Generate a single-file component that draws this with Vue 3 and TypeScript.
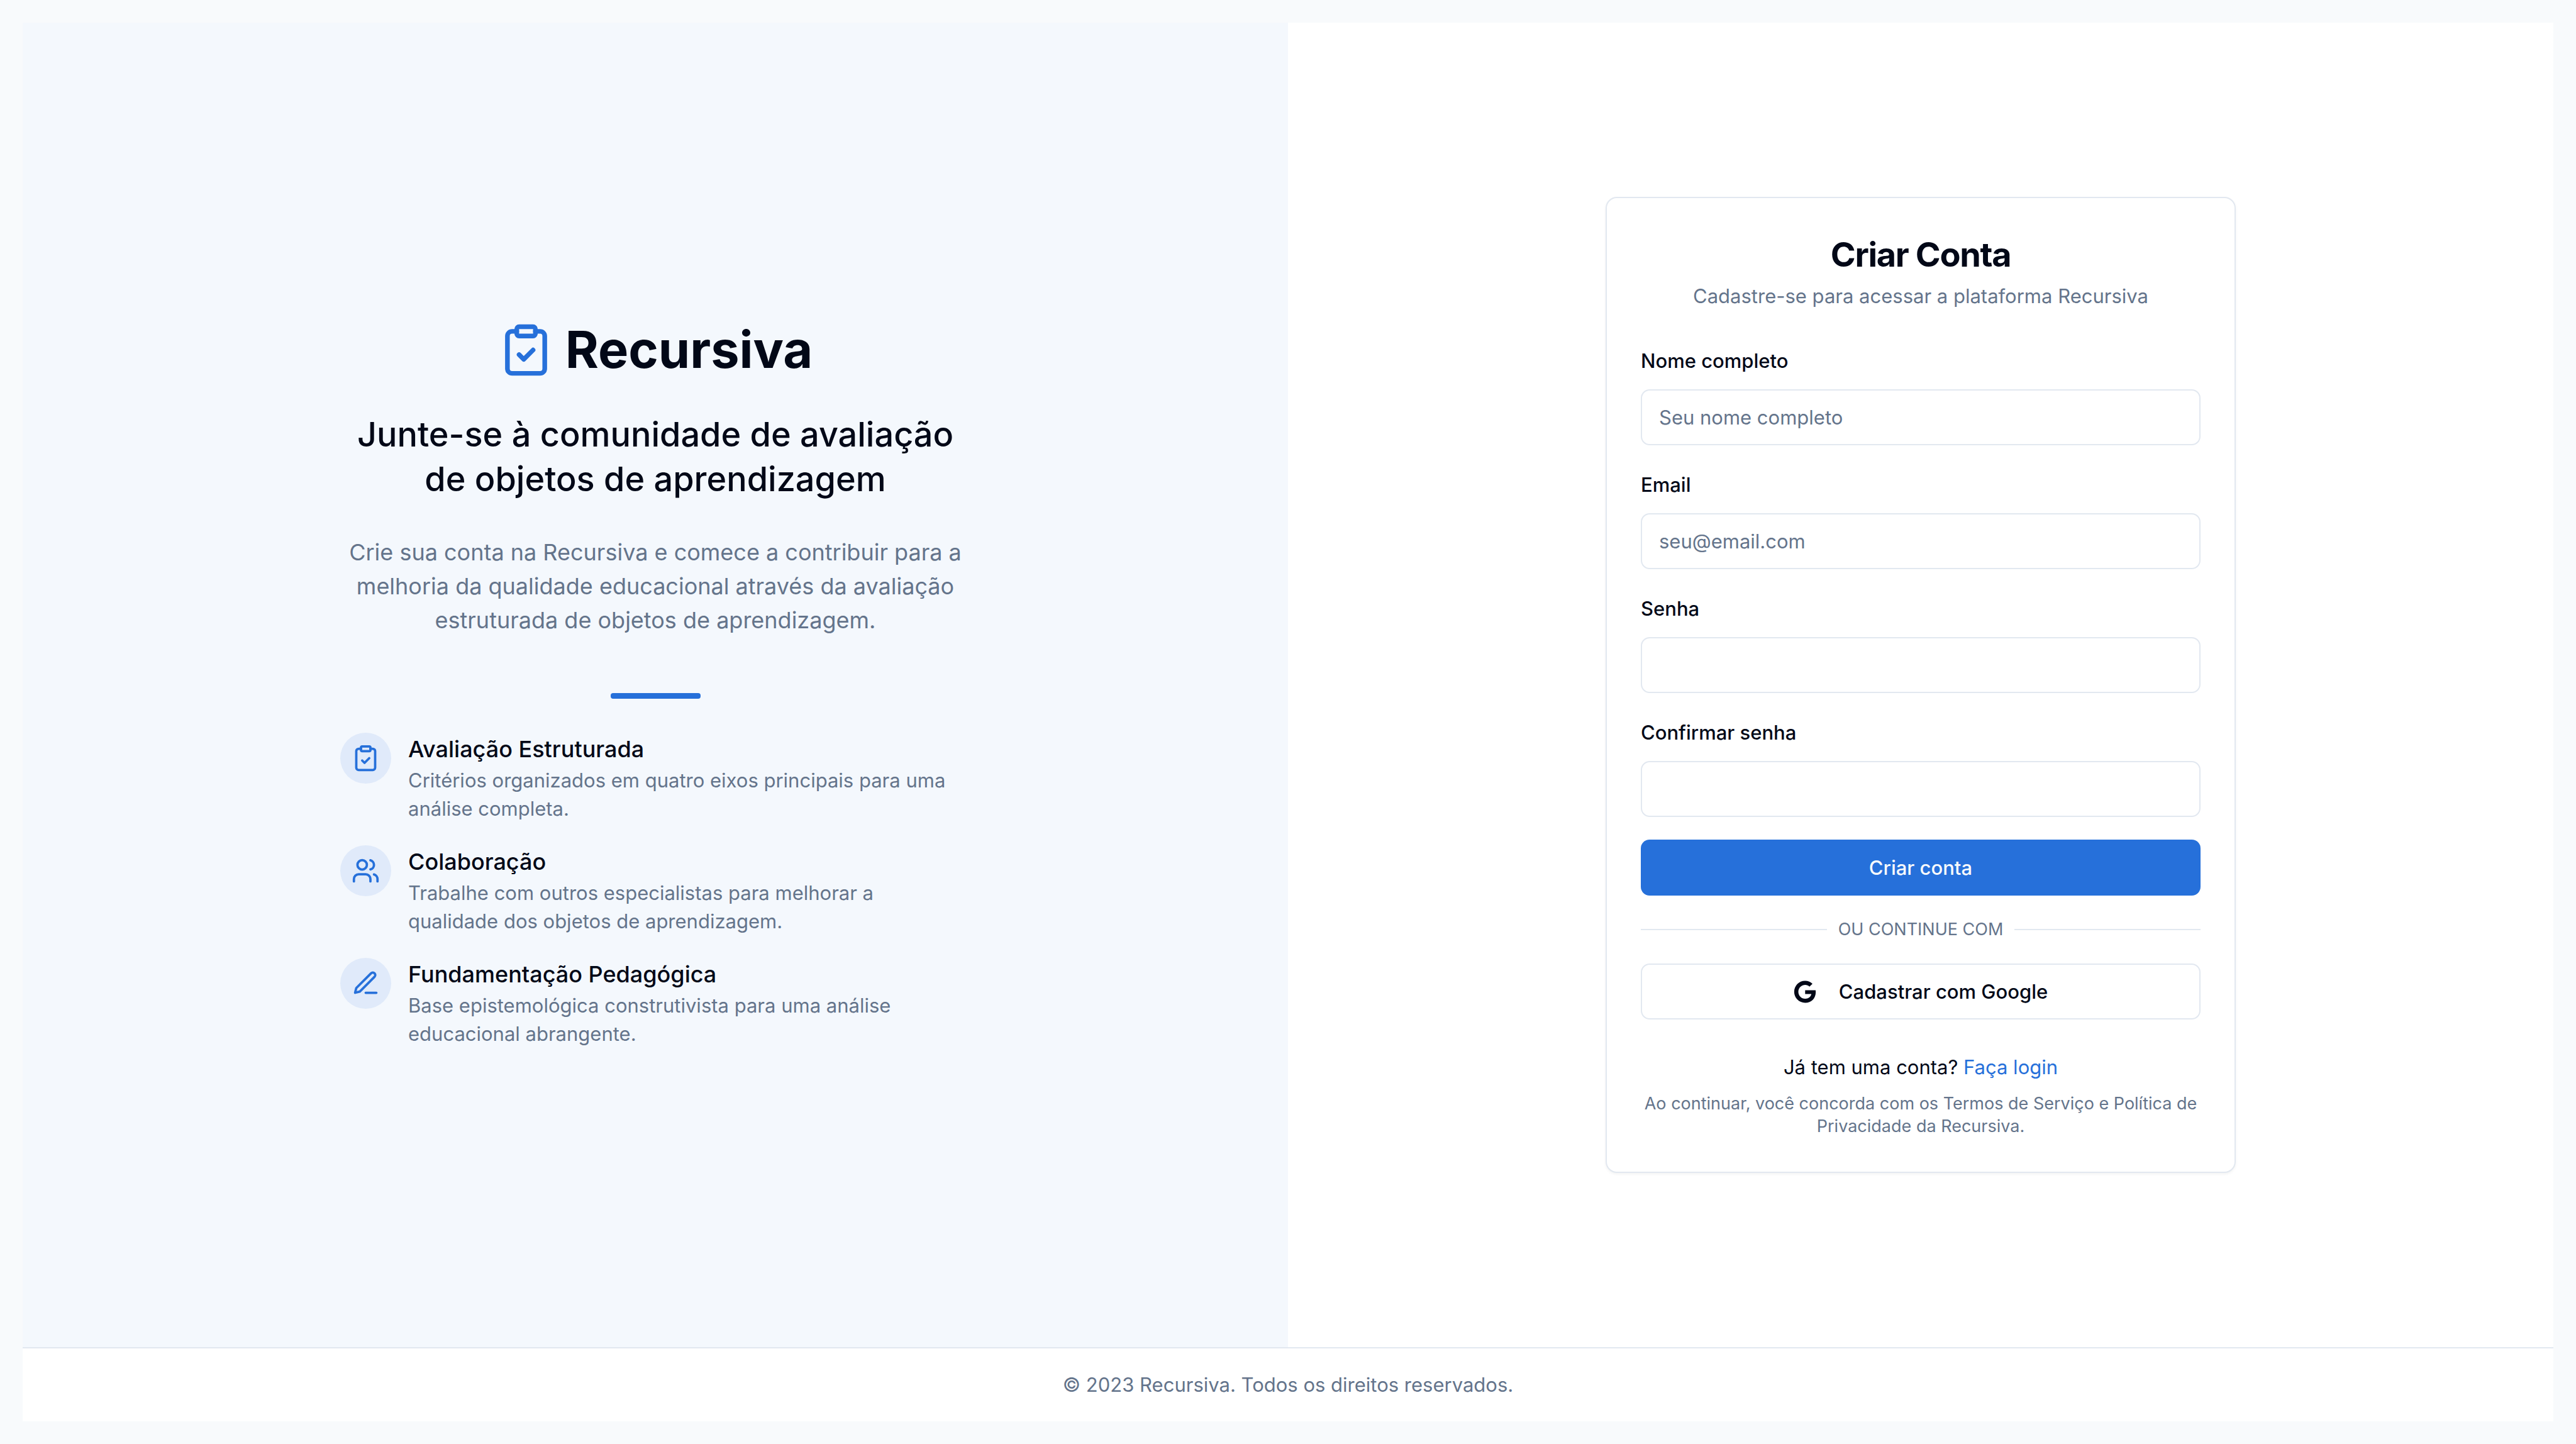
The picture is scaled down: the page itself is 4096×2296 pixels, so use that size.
<script setup lang="ts">
import { reactive } from 'vue'

type IconName = 'clipboard' | 'users' | 'pen'

interface Feature {
  icon: IconName
  title: string
  text: string
}

interface Field {
  id: 'name' | 'email' | 'password' | 'confirm'
  label: string
  type: string
  placeholder: string
}

const features: Feature[] = [
  {
    icon: 'clipboard',
    title: 'Avaliação Estruturada',
    text: 'Critérios organizados em quatro eixos principais para uma análise completa.',
  },
  {
    icon: 'users',
    title: 'Colaboração',
    text: 'Trabalhe com outros especialistas para melhorar a qualidade dos objetos de aprendizagem.',
  },
  {
    icon: 'pen',
    title: 'Fundamentação Pedagógica',
    text: 'Base epistemológica construtivista para uma análise educacional abrangente.',
  },
]

const fields: Field[] = [
  { id: 'name', label: 'Nome completo', type: 'text', placeholder: 'Seu nome completo' },
  { id: 'email', label: 'Email', type: 'email', placeholder: 'seu@email.com' },
  { id: 'password', label: 'Senha', type: 'password', placeholder: '' },
  { id: 'confirm', label: 'Confirmar senha', type: 'password', placeholder: '' },
]

const form = reactive<Record<Field['id'], string>>({
  name: '',
  email: '',
  password: '',
  confirm: '',
})
</script>

<template>
  <div class="page">
    <main class="columns">
      <section class="intro">
        <div class="intro-body">
          <div class="brand">
            <svg class="icon brand-icon" viewBox="0 0 24 24" aria-hidden="true">
              <rect width="8" height="4" x="8" y="2" rx="1" ry="1" />
              <path d="M16 4h2a2 2 0 0 1 2 2v14a2 2 0 0 1-2 2H6a2 2 0 0 1-2-2V6a2 2 0 0 1 2-2h2" />
              <path d="m9 14 2 2 4-4" />
            </svg>
            <h1>Recursiva</h1>
          </div>
          <h2>Junte-se à comunidade de avaliação de objetos de aprendizagem</h2>
          <p class="lead">
            Crie sua conta na Recursiva e comece a contribuir para a melhoria da qualidade
            educacional através da avaliação estruturada de objetos de aprendizagem.
          </p>
          <div class="bar"></div>
          <ul class="features">
            <li v-for="feature in features" :key="feature.title" class="feature">
              <span class="badge">
                <svg class="icon" viewBox="0 0 24 24" aria-hidden="true">
                  <template v-if="feature.icon === 'clipboard'">
                    <rect width="8" height="4" x="8" y="2" rx="1" ry="1" />
                    <path d="M16 4h2a2 2 0 0 1 2 2v14a2 2 0 0 1-2 2H6a2 2 0 0 1-2-2V6a2 2 0 0 1 2-2h2" />
                    <path d="m9 14 2 2 4-4" />
                  </template>
                  <template v-else-if="feature.icon === 'users'">
                    <path d="M16 21v-2a4 4 0 0 0-4-4H6a4 4 0 0 0-4 4v2" />
                    <circle cx="9" cy="7" r="4" />
                    <path d="M22 21v-2a4 4 0 0 0-3-3.87" />
                    <path d="M16 3.13a4 4 0 0 1 0 7.75" />
                  </template>
                  <template v-else>
                    <path d="M12 20h9" />
                    <path d="M16.5 3.5a2.12 2.12 0 0 1 3 3L7 19l-4 1 1-4Z" />
                  </template>
                </svg>
              </span>
              <div>
                <h3>{{ feature.title }}</h3>
                <p>{{ feature.text }}</p>
              </div>
            </li>
          </ul>
        </div>
      </section>

      <section class="signup">
        <div class="card">
          <header class="card-header">
            <h2>Criar Conta</h2>
            <p>Cadastre-se para acessar a plataforma Recursiva</p>
          </header>

          <form class="form" @submit.prevent>
            <div v-for="field in fields" :key="field.id" class="field">
              <label :for="field.id">{{ field.label }}</label>
              <input
                :id="field.id"
                v-model="form[field.id]"
                :type="field.type"
                :placeholder="field.placeholder"
              />
            </div>
            <button type="submit" class="button primary">Criar conta</button>
          </form>

          <div class="divider"><span>OU CONTINUE COM</span></div>

          <button type="button" class="button outline">
            <svg class="google" viewBox="0 0 488 512" aria-hidden="true">
              <path
                d="M488 261.8C488 403.3 391.1 504 248 504 110.8 504 0 393.2 0 256S110.8 8 248 8c66.8 0 123 24.5 166.3 64.9l-67.5 64.9C258.5 52.6 94.3 116.6 94.3 256c0 86.5 69.1 156.6 153.7 156.6 98.2 0 135-70.4 140.8-106.9H248v-85.3h236.1c2.3 12.7 3.9 24.9 3.9 41.4z"
              />
            </svg>
            Cadastrar com Google
          </button>

          <p class="login">Já tem uma conta? <a href="#login">Faça login</a></p>
          <p class="terms">
            Ao continuar, você concorda com os Termos de Serviço e Política de Privacidade da
            Recursiva.
          </p>
        </div>
      </section>
    </main>

    <footer class="footer">© 2023 Recursiva. Todos os direitos reservados.</footer>
  </div>
</template>

<style>
body {
  margin: 0;
  background: #f8fafc;
}
</style>

<style scoped>
.page,
.page * {
  box-sizing: border-box;
}

.page {
  --ink: #020817;
  --muted: #64748b;
  --line: #e2e8f0;
  --primary: #2670da;

  display: flex;
  flex-direction: column;
  min-height: 100vh;
  padding: 36px;
  color: var(--ink);
  font-family: Inter, "Liberation Sans", sans-serif;
  font-size: 31px;
  line-height: 44px;
}

h1,
h2,
h3,
p,
ul {
  margin: 0;
  padding: 0;
}

.columns {
  flex: 1;
  display: grid;
  grid-template-columns: 1fr 1fr;
  background: #ffffff;
}

.intro,
.signup {
  display: flex;
  align-items: center;
  justify-content: center;
}

.intro {
  background: #f4f8fd;
}

.intro-body,
.card {
  width: 100%;
  max-width: 1002px;
}

.intro-body {
  text-align: center;
}

.icon {
  display: block;
  width: 45px;
  height: 45px;
  fill: none;
  stroke: var(--primary);
  stroke-width: 2;
  stroke-linecap: round;
  stroke-linejoin: round;
}

.brand {
  display: flex;
  align-items: center;
  justify-content: center;
  gap: 18px;
  margin-bottom: 54px;
}

.brand-icon {
  width: 89px;
  height: 89px;
}

h1 {
  font-size: 81px;
  font-weight: 700;
  line-height: 89px;
}

h2 {
  font-size: 54px;
  line-height: 71px;
}

.intro h2 {
  margin-bottom: 54px;
  font-weight: 500;
}

.lead {
  color: var(--muted);
  font-size: 36px;
  line-height: 54px;
}

.bar {
  width: 143px;
  height: 9px;
  margin: 89px auto 54px;
  border-radius: 4px;
  background: var(--primary);
}

.features {
  display: flex;
  flex-direction: column;
  gap: 36px;
  list-style: none;
  text-align: left;
}

.feature {
  display: flex;
  align-items: flex-start;
  gap: 27px;
  padding-right: 18px;
}

.badge {
  flex: none;
  padding: 18px;
  border-radius: 50%;
  background: #e0eafa;
}

h3 {
  font-size: 36px;
  font-weight: 500;
  line-height: 53px;
}

.feature p {
  color: var(--muted);
  line-height: 45px;
}

.card {
  padding: 54px;
  border: 2px solid var(--line);
  border-radius: 18px;
  background: #ffffff;
  box-shadow: 0 2px 4px rgba(0, 0, 0, 0.05);
}

.card-header {
  margin-bottom: 54px;
  text-align: center;
}

.card-header h2 {
  margin-bottom: 9px;
  font-weight: 700;
  letter-spacing: -0.025em;
}

.card-header p {
  color: var(--muted);
}

.form {
  display: flex;
  flex-direction: column;
  gap: 36px;
}

.field {
  display: flex;
  flex-direction: column;
  gap: 18px;
}

label {
  font-weight: 500;
  line-height: 54px;
}

input {
  width: 100%;
  height: 89px;
  padding: 0 27px;
  border: 2px solid var(--line);
  border-radius: 14px;
  background: #ffffff;
  color: var(--ink);
  font: inherit;
}

input::placeholder {
  color: var(--muted);
  opacity: 1;
}

.button {
  display: flex;
  align-items: center;
  justify-content: center;
  gap: 36px;
  width: 100%;
  height: 89px;
  padding: 0 36px;
  border: 0;
  border-radius: 14px;
  font: inherit;
  font-weight: 500;
  cursor: pointer;
}

.primary {
  background: var(--primary);
  color: #f8fafc;
}

.outline {
  border: 2px solid var(--line);
  background: #ffffff;
  color: var(--ink);
}

.google {
  width: 36px;
  height: 36px;
  fill: currentColor;
}

.divider {
  display: flex;
  align-items: center;
  gap: 18px;
  margin: 36px 0;
  color: var(--muted);
  font-size: 27px;
  line-height: 36px;
}

.divider::before,
.divider::after {
  content: "";
  flex: 1;
  height: 2px;
  background: var(--line);
}

.login {
  margin: 54px 0 18px;
  text-align: center;
}

.login a {
  color: var(--primary);
  text-decoration: none;
}

.terms {
  color: var(--muted);
  font-size: 27px;
  line-height: 36px;
  text-align: center;
}

.footer {
  padding: 36px;
  border-top: 2px solid var(--line);
  background: #ffffff;
  color: var(--muted);
  text-align: center;
}
</style>
